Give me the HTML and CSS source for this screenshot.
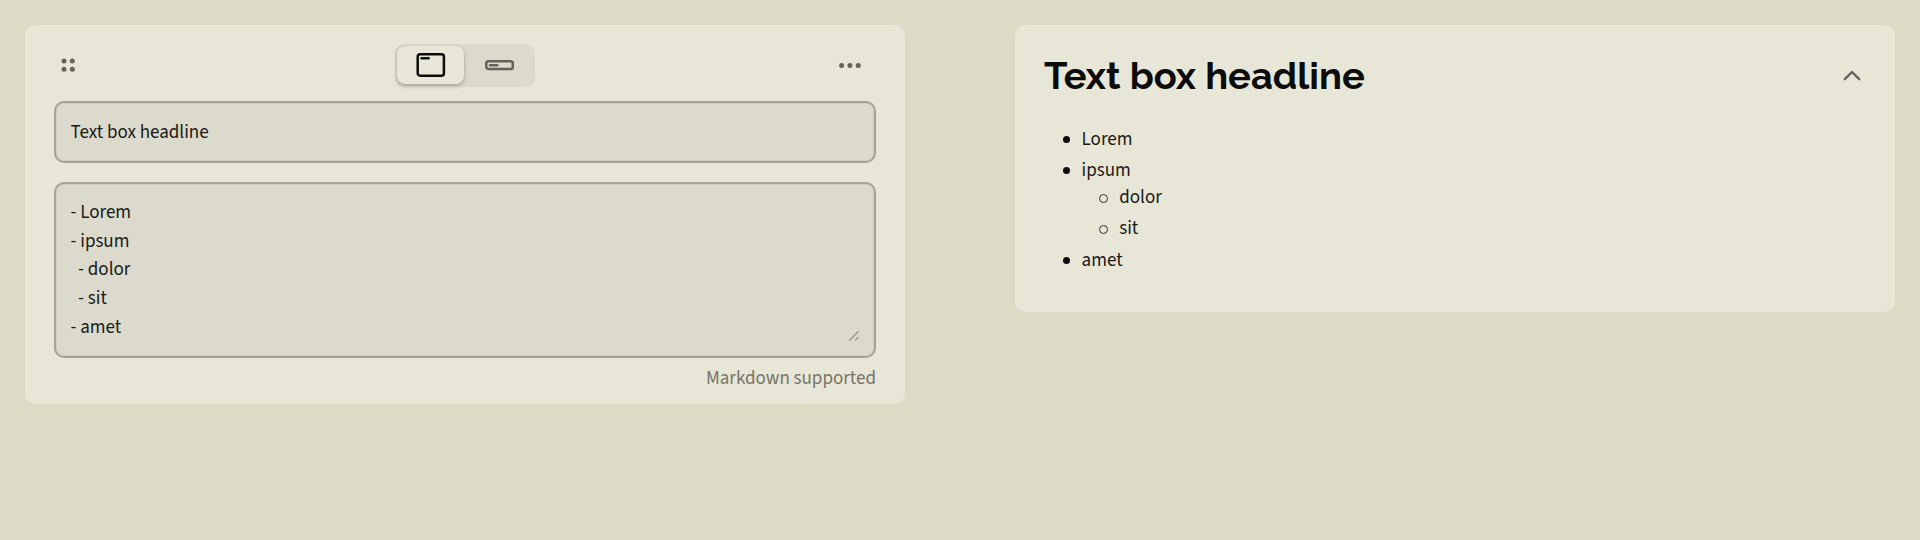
FILE: index.html
```html
<!DOCTYPE html>
<html lang="en">
<head>
<meta charset="utf-8">
<title>Text box</title>
<link rel="stylesheet" href="styles.css">
</head>
<body>
<main class="page">
  <section class="panel editor">
    <header class="toolbar">
      <svg class="icon drag" width="28" height="28" viewBox="0 0 28 28"><circle cx="10" cy="9" r="2.5"/><circle cx="18.3" cy="9" r="2.5"/><circle cx="10" cy="17.3" r="2.5"/><circle cx="18.3" cy="17.3" r="2.5"/></svg>
      <div class="switch">
        <button class="option active" aria-label="Box"><svg width="30" height="26" viewBox="0 0 30 26"><rect x="1.7" y="2.3" width="26.2" height="21.4" rx="2.5"/><path d="M5.6 6.2h7"/></svg></button>
        <button class="option" aria-label="Line"><svg width="30" height="26" viewBox="0 0 30 26"><rect x="2.3" y="9.3" width="26.5" height="7.8" rx="2.2"/><path d="M6 13.2h7.2"/></svg></button>
      </div>
      <svg class="icon more" width="28" height="28" viewBox="0 0 28 28"><circle cx="5.6" cy="13.4" r="2.5"/><circle cx="13.9" cy="13.4" r="2.5"/><circle cx="22.2" cy="13.4" r="2.5"/></svg>
    </header>
    <input class="field title-field" type="text" value="Text box headline">
    <div class="field body-field">
      <textarea class="body-text" rows="5">- Lorem
- ipsum
  - dolor
  - sit
- amet</textarea>
      <svg class="grip" width="12" height="12" viewBox="0 0 12 12"><path d="M1.2 10.6l9.4-9.4M7.2 10.4l3.2-3.2"/></svg>
    </div>
    <div class="hint">Markdown supported</div>
  </section>
  <section class="panel preview">
    <header class="preview-head">
      <h1 class="headline">Text box headline</h1>
      <svg class="chevron" width="20" height="14" viewBox="0 0 20 14"><path d="M2.8 10.2L10 3l7.2 7.2"/></svg>
    </header>
    <ul class="list">
      <li class="item">Lorem</li>
      <li class="item">ipsum
        <ul class="list nested">
          <li class="item hollow">dolor</li>
          <li class="item hollow">sit</li>
        </ul>
      </li>
      <li class="item">amet</li>
    </ul>
  </section>
</main>
</body>
</html>
```
FILE: styles.css
```css
* { box-sizing: border-box; }
body {
  margin: 0;
  background: #dddbc5;
  color: #1a1a18;
  font: 400 19px/28.6px "Source Sans 3", "Noto Sans CJK SC", sans-serif;
}
.page {
  display: grid;
  grid-template-columns: 880px 880px;
  column-gap: 110px;
  align-items: start;
  padding: 25px;
}
.panel {
  background: #e8e6d7;
  border-radius: 10px;
}
.editor { height: 379px; padding: 19px 29px 0; }
.toolbar {
  display: flex;
  justify-content: space-between;
  align-items: center;
  height: 43px;
  margin-bottom: 14px;
}
.icon { fill: #63625b; }
.more { margin-right: 12px; }
.drag { margin-right: 12px; }
.switch {
  display: flex;
  width: 140px;
  height: 43px;
  padding: 2px 2px 3px;
  background: #dcdacc;
  border-radius: 9px;
}
.option {
  display: flex;
  align-items: center;
  justify-content: center;
  width: 69px;
  padding: 0;
  border: 0;
  border-radius: 8px;
  background: none;
}
.option.active {
  width: 67px;
  background: #e8e6d7;
  box-shadow: 0 2px 4px rgba(70, 68, 50, .35), 0 0 1px rgba(70, 68, 50, .2);
}
.option svg { fill: none; stroke: #63625b; stroke-width: 2.5; stroke-linecap: round; }
.option.active svg { stroke: #0c0c0c; }
.field {
  display: block;
  width: 100%;
  border: 2px solid #a6a498;
  border-radius: 10px;
  background: #dcdacc;
  color: #1a1a18;
  font: inherit;
  box-shadow: inset 0 0 0 1px #d0cec0;
}
.title-field { height: 62px; padding: 0 14.5px; }
.body-field { position: relative; height: 176px; margin-top: 19px; padding: 15px 14.5px 13px; }
.body-text {
  display: block;
  width: 100%;
  height: 144px;
  padding: 0;
  border: 0;
  background: none;
  color: inherit;
  font: inherit;
  line-height: 28.7px;
  resize: none;
  overflow: hidden;
}
.grip { position: absolute; right: 14px; bottom: 14px; fill: none; stroke: #8d8b80; stroke-width: 1.2; }
.hint { margin-top: 7px; text-align: right; color: #777569; }
.preview { height: 287px; padding: 29px 29px 0; }
.preview-head {
  display: flex;
  justify-content: space-between;
  align-items: center;
  height: 44px;
}
.headline {
  margin: 0;
  font: 700 38px/44px Raleway, Lato, sans-serif;
  color: #0c0c0c;
}
.chevron { margin-right: 4px; fill: none; stroke: #63625b; stroke-width: 2.4; stroke-linecap: round; stroke-linejoin: round; }
.list { margin: 28px 0 0; padding: 0 0 0 37.6px; list-style: none; line-height: 27px; }
.list.nested { margin: 0; }
.item { margin-bottom: 4.2px; position: relative; }
.item::before {
  content: "";
  position: absolute;
  left: -19px;
  top: 10px;
  width: 7px;
  height: 7px;
  border-radius: 50%;
  background: #0c0c0c;
}
.item.hollow::before { left: -20px; background: none; border: 1px solid #333; }
```
